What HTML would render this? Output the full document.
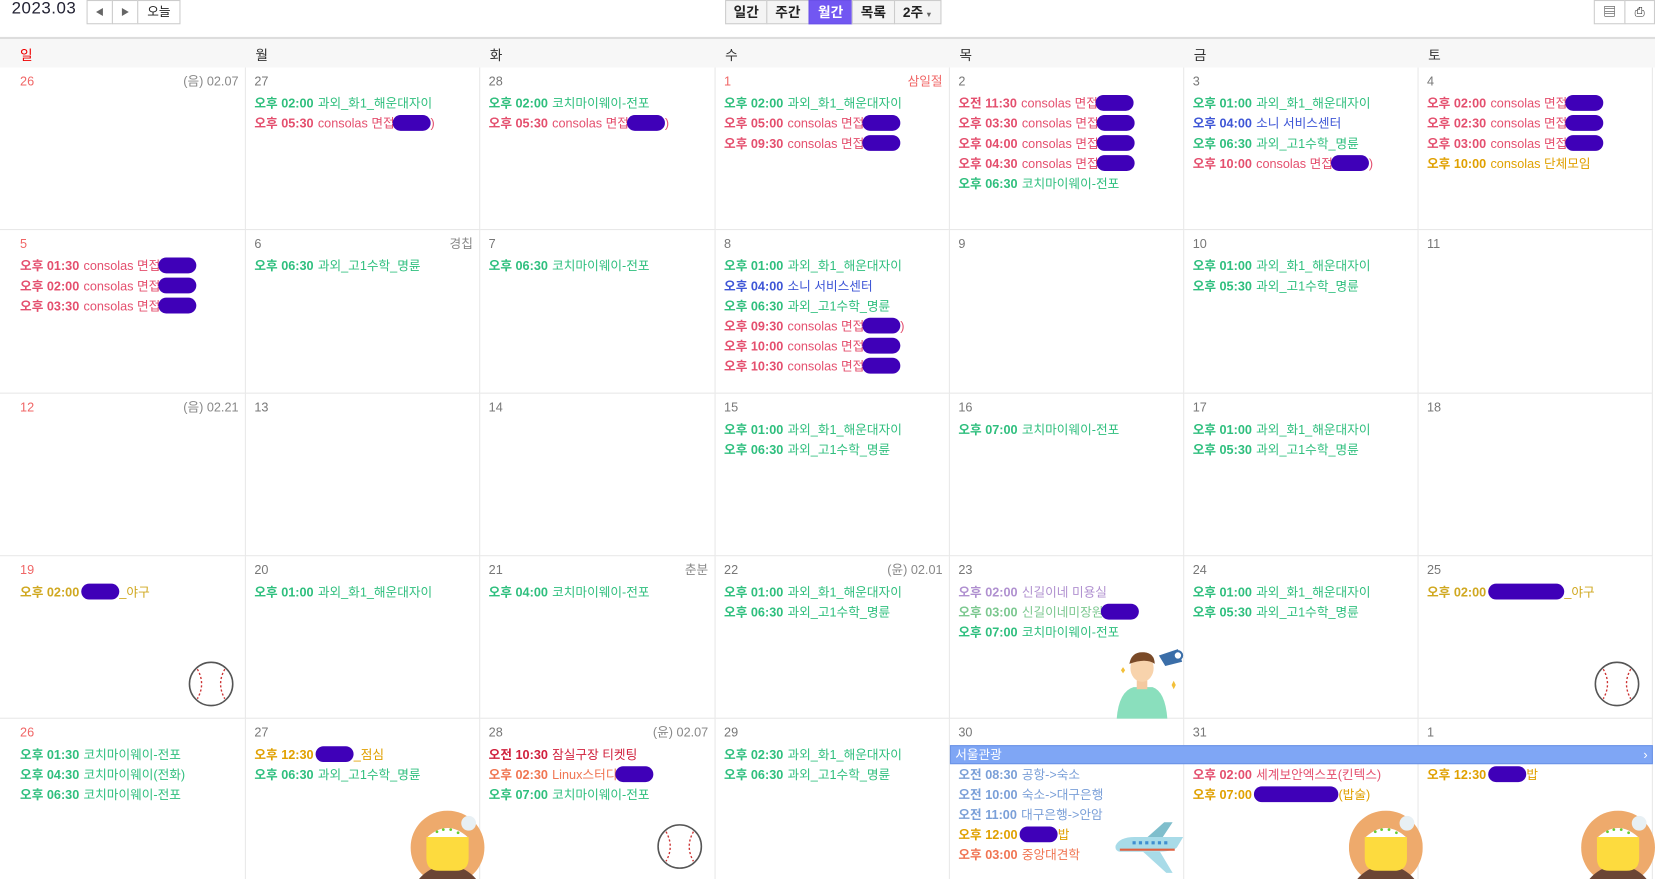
<!DOCTYPE html>
<html><head><meta charset="utf-8">
<style>
*{margin:0;padding:0;box-sizing:border-box}
body{width:1655px;height:879px;overflow:hidden;background:#fff;font-family:"Liberation Sans","Noto Sans CJK KR",sans-serif;font-size:12px;color:#333;position:relative}
#wrap{position:absolute;left:0;top:0;width:1568px;height:833px;overflow:hidden;transform:scale(1.05548);transform-origin:0 0}
.a{position:absolute}
.btn{position:absolute;top:0;height:23px;border:1px solid #ccc;background:#fff;font-size:12px;text-align:center;line-height:21px;color:#222}
.vb{position:absolute;top:0;height:23px;border:1px solid #ccc;background:#f4f4f4;font-size:13px;font-weight:bold;text-align:center;line-height:21px;color:#222}
.hd{position:absolute;top:35px;left:0;width:1568px;height:29px;background:#f7f7f7;border-top:2px solid #ddd}
.hd span{position:absolute;top:5px;font-size:13px;color:#333}
.cell{position:absolute;border-right:1px solid #e8e8e8;border-bottom:1px solid #e8e8e8;overflow:hidden}
.n{position:absolute;top:4px;line-height:19px;color:#777;font-size:12px}
.r{position:absolute;top:4px;right:6px;line-height:19px;color:#888;font-size:12px}
.ev{position:absolute;left:0;white-space:nowrap;line-height:19px;font-size:12px}
.ev b{margin-right:4px}
.bl{display:inline-block;width:40px;height:15px;background:#3f00b8;border-radius:8px;vertical-align:-3px;margin-left:-2px}
.G{color:#2fbf7e}.R{color:#e44f6e}.B{color:#3e56d6}.O{color:#e0a000}.Y{color:#d0a820}.L{color:#b090d0}.LG{color:#7cc890}.SB{color:#7a9fd8}.C{color:#f07552}.DR{color:#d0203c}
</style></head><body>
<div id="wrap">
<div class="a" style="left:11px;top:0px;font-size:16px;color:#223;letter-spacing:0.5px">2023.03</div>
<div class="btn" style="left:82px;width:25px;font-size:8px;color:#666">◀</div>
<div class="btn" style="left:106px;width:25px;font-size:8px;color:#666">▶</div>
<div class="btn" style="left:130px;width:41px">오늘</div>
<div class="vb" style="left:687px;width:40px">일간</div>
<div class="vb" style="left:726px;width:41px">주간</div>
<div class="vb" style="left:766px;width:42px;background:#7257f2;color:#fff;border-color:#6a50e8">월간</div>
<div class="vb" style="left:807px;width:41px">목록</div>
<div class="vb" style="left:847px;width:45px">2주<span style="font-size:7px;color:#666"> ▼</span></div>
<div class="btn" style="left:1510px;width:30px;font-size:12px">▤</div>
<div class="btn" style="left:1539px;width:29px;font-size:12px">⎙</div>
<div class="hd">
<span style="left:19px;color:#e00">일</span><span style="left:242px">월</span><span style="left:464px">화</span><span style="left:687px">수</span><span style="left:909px">목</span><span style="left:1131px">금</span><span style="left:1353px">토</span>
</div>
<div id="cal"></div>
<div class="a" style="left:900px;top:706px;width:666px;height:18px;background:#7fa6f5;border:1px solid #6b93e6;color:#fff;font-size:12px;line-height:16px;padding-left:4px">서울관광<span style="position:absolute;right:4px">›</span></div>
</div>
<script>
const L=[0,233,455,678,900,1122,1344],W=[233,222,223,222,222,222,222],T=[64,218,373,527,681],H=[154,155,154,154,160];
const g=(c,t,x,bl,s)=>({c,t,x,bl,s});
const days=[
[["26","(음) 02.07",1,[]],["27","",0,[g("G","오후 02:00","과외_화1_해운대자이"),g("R","오후 05:30","consolas 면접",1,")")]],["28","",0,[g("G","오후 02:00","코치마이웨이-전포"),g("R","오후 05:30","consolas 면접",1,")")]],["1","삼일절",1,[g("G","오후 02:00","과외_화1_해운대자이"),g("R","오후 05:00","consolas 면접",1),g("R","오후 09:30","consolas 면접",1)]],["2","",0,[g("R","오전 11:30","consolas 면접",1),g("R","오후 03:30","consolas 면접",1),g("R","오후 04:00","consolas 면접",1),g("R","오후 04:30","consolas 면접",1),g("G","오후 06:30","코치마이웨이-전포")]],["3","",0,[g("G","오후 01:00","과외_화1_해운대자이"),g("B","오후 04:00","소니 서비스센터"),g("G","오후 06:30","과외_고1수학_명륜"),g("R","오후 10:00","consolas 면접",1,")")]],["4","",0,[g("R","오후 02:00","consolas 면접",1),g("R","오후 02:30","consolas 면접",1),g("R","오후 03:00","consolas 면접",1),g("O","오후 10:00","consolas 단체모임")]]],
[["5","",1,[g("R","오후 01:30","consolas 면접",1),g("R","오후 02:00","consolas 면접",1),g("R","오후 03:30","consolas 면접",1)]],["6","경칩",0,[g("G","오후 06:30","과외_고1수학_명륜")]],["7","",0,[g("G","오후 06:30","코치마이웨이-전포")]],["8","",0,[g("G","오후 01:00","과외_화1_해운대자이"),g("B","오후 04:00","소니 서비스센터"),g("G","오후 06:30","과외_고1수학_명륜"),g("R","오후 09:30","consolas 면접",1,")"),g("R","오후 10:00","consolas 면접",1),g("R","오후 10:30","consolas 면접",1)]],["9","",0,[]],["10","",0,[g("G","오후 01:00","과외_화1_해운대자이"),g("G","오후 05:30","과외_고1수학_명륜")]],["11","",0,[]]],
[["12","(음) 02.21",1,[]],["13","",0,[]],["14","",0,[]],["15","",0,[g("G","오후 01:00","과외_화1_해운대자이"),g("G","오후 06:30","과외_고1수학_명륜")]],["16","",0,[g("G","오후 07:00","코치마이웨이-전포")]],["17","",0,[g("G","오후 01:00","과외_화1_해운대자이"),g("G","오후 05:30","과외_고1수학_명륜")]],["18","",0,[]]],
[["19","",1,[g("Y","오후 02:00","",1,"_야구")]],["20","",0,[g("G","오후 01:00","과외_화1_해운대자이")]],["21","춘분",0,[g("G","오후 04:00","코치마이웨이-전포")]],["22","(윤) 02.01",0,[g("G","오후 01:00","과외_화1_해운대자이"),g("G","오후 06:30","과외_고1수학_명륜")]],["23","",0,[g("L","오후 02:00","신길이네 미용실"),g("LG","오후 03:00","신길이네미장원",1),g("G","오후 07:00","코치마이웨이-전포")]],["24","",0,[g("G","오후 01:00","과외_화1_해운대자이"),g("G","오후 05:30","과외_고1수학_명륜")]],["25","",0,[g("Y","오후 02:00","",2,"_야구")]]],
[["26","",1,[g("G","오후 01:30","코치마이웨이-전포"),g("G","오후 04:30","코치마이웨이(전화)"),g("G","오후 06:30","코치마이웨이-전포")]],["27","",0,[g("O","오후 12:30","",1,"_점심"),g("G","오후 06:30","과외_고1수학_명륜")]],["28","(윤) 02.07",0,[g("DR","오전 10:30","잠실구장 티켓팅"),g("C","오후 02:30","Linux스터디",1),g("G","오후 07:00","코치마이웨이-전포")]],["29","",0,[g("G","오후 02:30","과외_화1_해운대자이"),g("G","오후 06:30","과외_고1수학_명륜")]],["30","",0,[null,g("SB","오전 08:30","공항->숙소"),g("SB","오전 10:00","숙소->대구은행"),g("SB","오전 11:00","대구은행->안암"),g("O","오후 12:00","",1,"밥"),g("C","오후 03:00","중앙대견학")]],["31","",0,[null,g("R","오후 02:00","세계보안엑스포(킨텍스)"),g("O","오후 07:00","",3,"(밥술)")]],["1","",0,[null,g("O","오후 12:30","",1,"밥")]]]
];
const ball=(x,y)=>`<svg class="a" style="left:${x}px;top:${y}px" width="44" height="44" viewBox="0 0 44 44"><circle cx="22" cy="22" r="20.5" fill="#fff" stroke="#555" stroke-width="1.5"/><path d="M9 8 Q17 22 9 36 M35 8 Q27 22 35 36" fill="none" stroke="#c33" stroke-width="1.3" stroke-dasharray="2 2"/></svg>`;
const rice=(x,y)=>`<svg class="a" style="left:${x}px;top:${y}px" width="70" height="70" viewBox="0 0 70 70"><circle cx="35" cy="35" r="35" fill="#eeaa6c"/><path d="M0 52 H70 V70 H0Z" fill="#6b4535" clip-path="circle(35px at 35px 35px)"/><path d="M16 25 Q35 8 54 25 Z" fill="#fff"/><path d="M15 25 H55 V45 Q55 57 43 57 H27 Q15 57 15 45Z" fill="#fddb3e"/><circle cx="55" cy="12" r="7" fill="#e8f0f4"/><g fill="#6c3"><circle cx="25" cy="20" r="1.3"/><circle cx="31" cy="18" r="1.3"/><circle cx="38" cy="18" r="1.3"/><circle cx="45" cy="21" r="1.3"/></g></svg>`;
let h='';
days.forEach((row,ri)=>row.forEach((d,ci)=>{
 const pl=ci==0?19:8;
 h+=`<div class="cell" style="left:${L[ci]}px;top:${T[ri]}px;width:${W[ci]}px;height:${H[ri]}px">`;
 h+=`<div class="n" style="left:${pl}px;${d[2]?'color:#f06666':''}">${d[0]}</div>`;
 if(d[1])h+=`<div class="r" style="${d[1]=='삼일절'?'color:#f06666':''}">${d[1]}</div>`;
 d[3].forEach((e,i)=>{if(!e)return;const bw=e.bl==2?72:e.bl==3?80:e.bl?36:0;
  h+=`<div class="ev ${e.c}" style="left:${pl}px;top:${25+i*19}px"><b>${e.t}</b>${e.x}${bw?`<span class="bl" style="width:${bw}px"></span>`:''}${e.s||''}</div>`;});
 h+='</div>';
}));
h+=ball(178,626)+ball(1510,626)+ball(622,780);
h+=rice(389,768)+rice(1278,768)+rice(1498,768);
h+=`<svg class="a" style="left:1052px;top:613px" width="72" height="68" viewBox="0 0 72 68"><path d="M6 68 Q8 42 22 38 H40 Q52 42 54 68Z" fill="#8adfbd"/><rect x="25" y="28" width="10" height="12" fill="#f4c9a0"/><ellipse cx="30" cy="20" rx="11" ry="13" fill="#f8d3ac"/><path d="M18 16 Q20 4 32 5 Q42 6 42 16 Q34 10 18 16Z" fill="#7a4a28"/><path d="M46 8 L64 2 L68 14 L52 18Z" fill="#3b6ea8"/><circle cx="64" cy="8" r="4" fill="#fff" stroke="#3b6ea8" stroke-width="2"/><path d="M58 36 l2 -4 2 4 -2 4z M10 22 l2 -3 2 3 -2 3z" fill="#f3c03a"/></svg>`;
h+=`<svg class="a" style="left:1055px;top:775px" width="70" height="55" viewBox="0 0 70 55"><path d="M30 20 L48 4 H56 L44 22Z" fill="#7fbecc"/><path d="M2 26 Q6 18 20 18 H66 L60 28 Q56 32 40 32 H6 Q1 31 2 26Z" fill="#a8dbe8"/><path d="M6 30 H58" stroke="#e06040" stroke-width="2"/><g fill="#3f8fd0"><rect x="18" y="22" width="3" height="3"/><rect x="24" y="22" width="3" height="3"/><rect x="30" y="22" width="3" height="3"/><rect x="36" y="22" width="3" height="3"/><rect x="42" y="22" width="3" height="3"/><rect x="48" y="22" width="3" height="3"/></g><path d="M28 32 L50 52 H56 L44 32Z" fill="#a8dbe8"/></svg>`;
document.getElementById('cal').innerHTML=h;
</script>
</body></html>
